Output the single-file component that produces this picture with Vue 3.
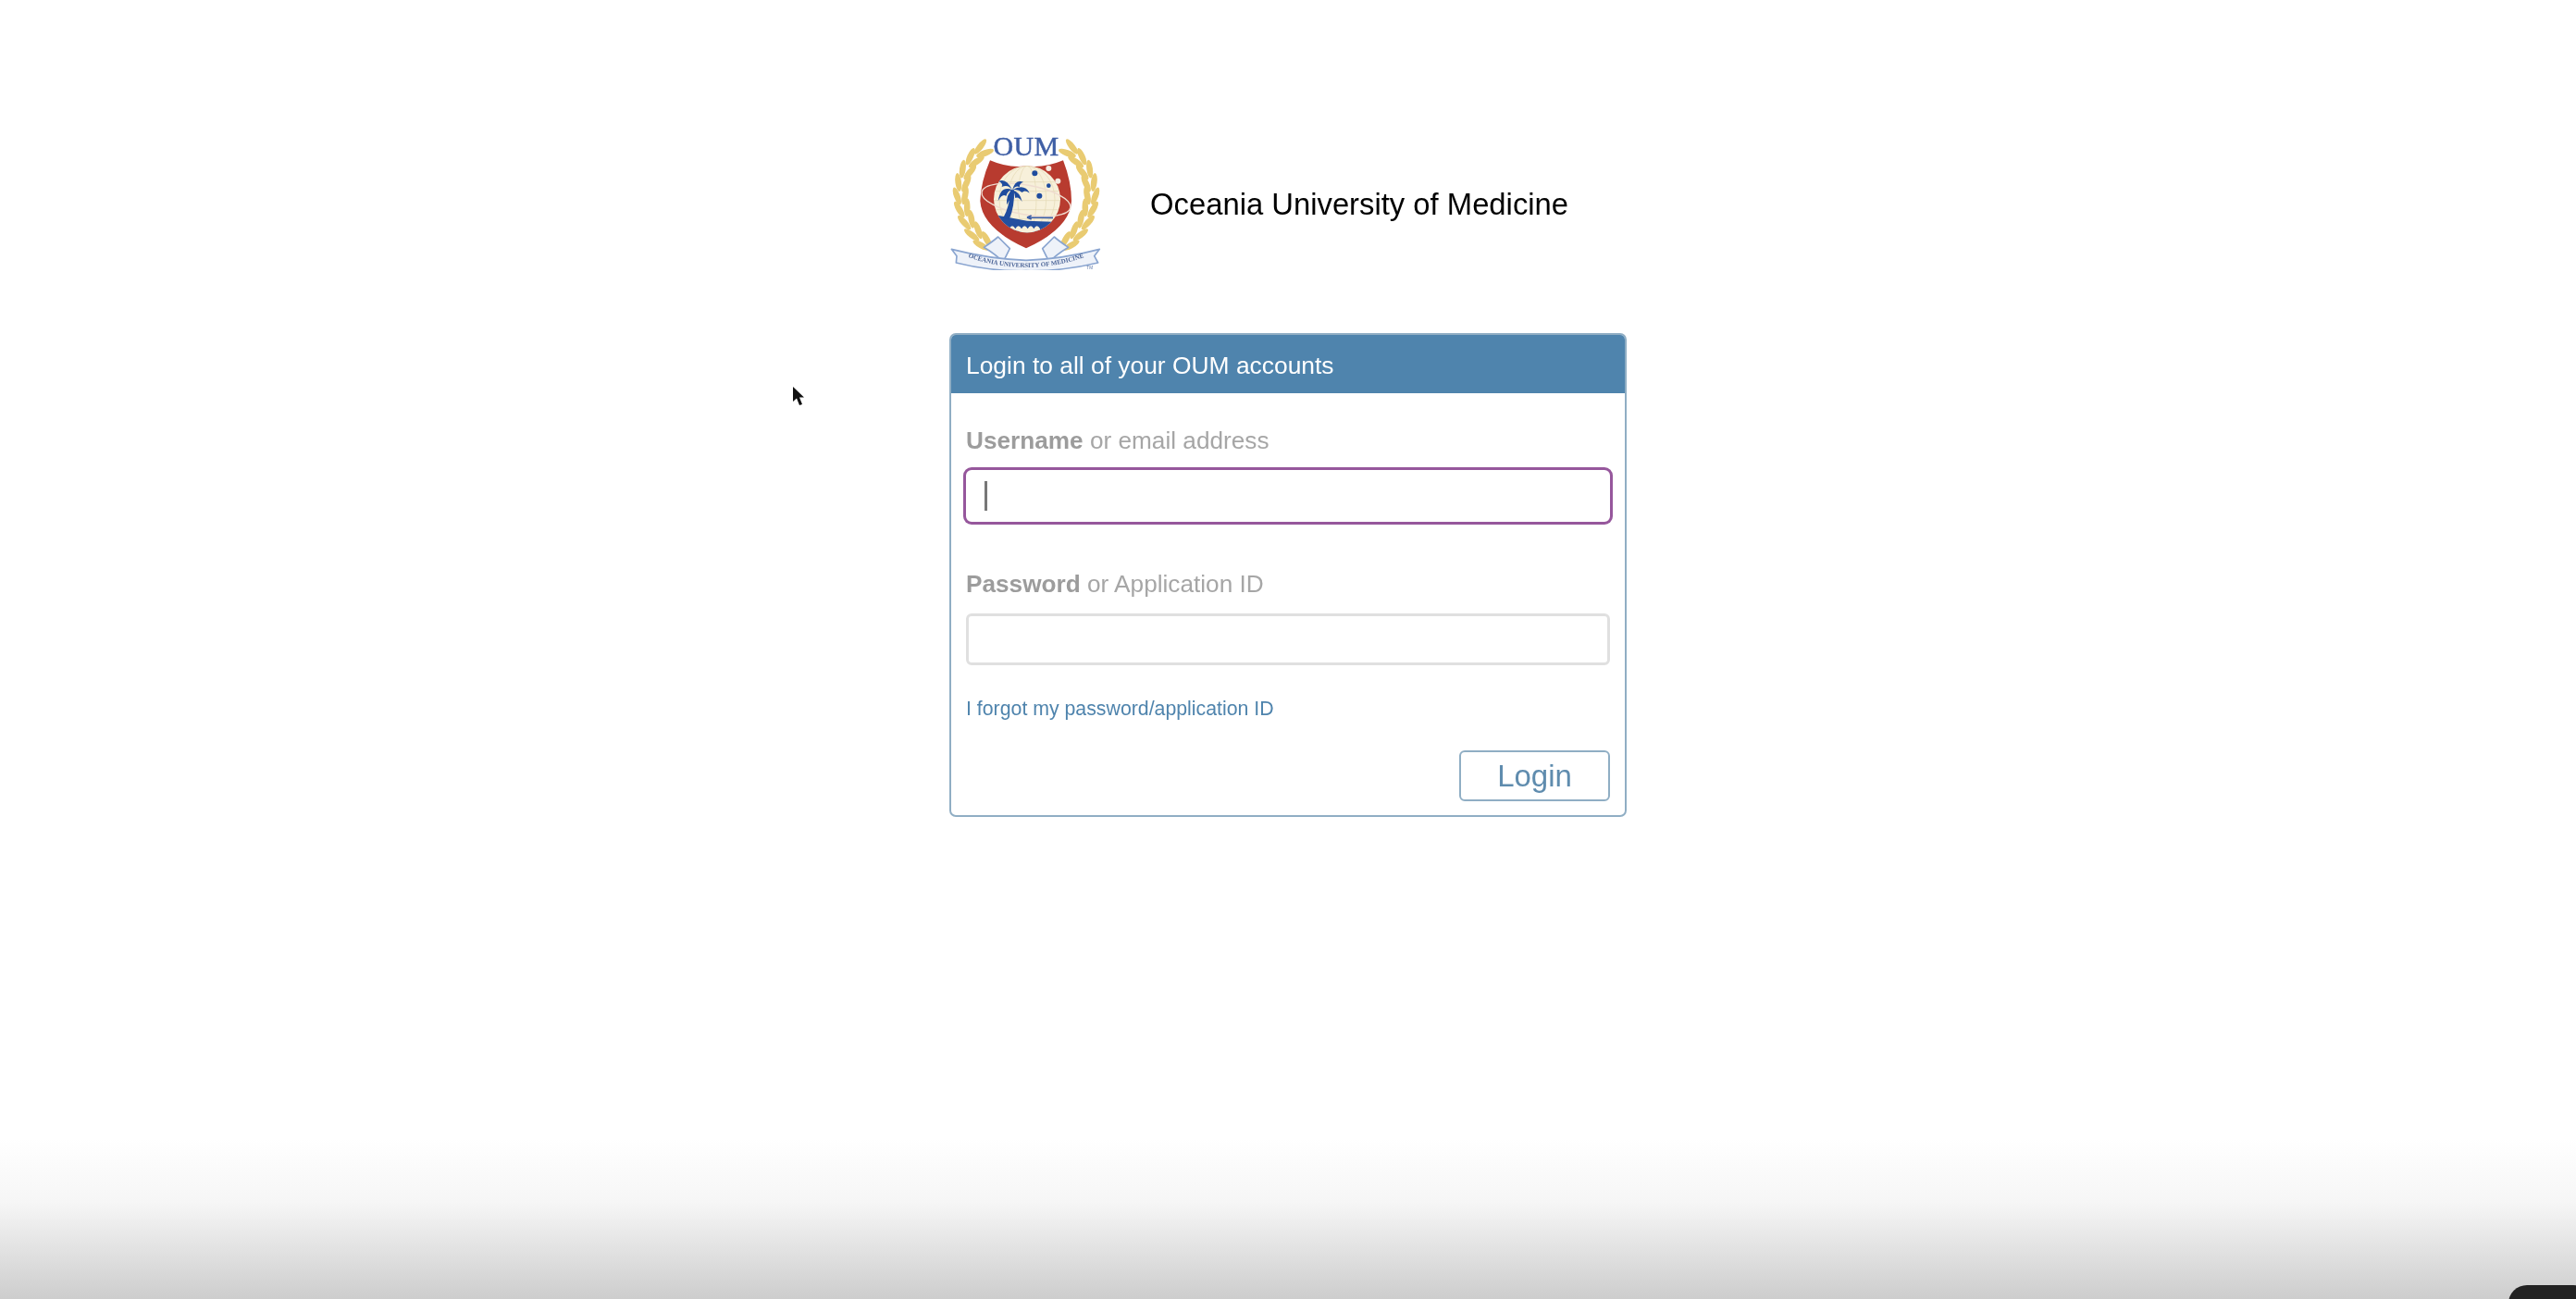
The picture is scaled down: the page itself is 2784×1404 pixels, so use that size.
<script setup>
// centre line of the left laurel: x, y, tangent angle. Right one is mirrored.
const branch = [
  [156, 96, 54], [126, 126, 40], [103, 163, 24], [90, 203, 9], [86, 245, -4],
  [93, 286, -15], [108, 326, -26], [131, 364, -36], [160, 396, -45]
]
const leaves = branch.flatMap(([x, y, a]) => {
  const rad = (a * Math.PI) / 180
  const dx = Math.cos(rad) * 13
  const dy = Math.sin(rad) * 13
  return [
    { x: x - dx, y: y - dy, r: a - 16 },
    { x: x + dx, y: y + dy, r: a + 16 }
  ]
})
const lat = [200, 230, 260, 290, 320]
const lon = [30, 62, 90]
</script>

<template>
  <div class="page">
    <div class="wrap">
      <div class="brand">
        <svg class="logo" viewBox="48 36 504 450">
          <g fill="#e9cb72">
            <ellipse v-for="(l, i) in leaves" :key="'a' + i" :cx="l.x" :cy="l.y" rx="10" ry="30" :transform="`rotate(${l.r} ${l.x} ${l.y})`" />
            <g transform="translate(594 0) scale(-1 1)">
              <ellipse v-for="(l, i) in leaves" :key="'b' + i" :cx="l.x" :cy="l.y" rx="10" ry="30" :transform="`rotate(${l.r} ${l.x} ${l.y})`" />
            </g>
          </g>
          <text class="oum" x="297" y="115" text-anchor="middle">OUM</text>
          <path d="M180 130 Q240 156 297 148 Q355 156 417 130 Q444 200 444 262 Q440 350 297 415 Q154 350 148 262 Q150 200 180 130Z" fill="#b83b2f" />
          <clipPath id="globe"><circle cx="300" cy="256" r="108" /></clipPath>
          <circle cx="300" cy="256" r="108" fill="#f7f0da" />
          <g clip-path="url(#globe)">
            <g fill="none" stroke="#e4d9b4" stroke-width="2">
              <line v-for="y in lat" :key="y" x1="190" x2="410" :y1="y" :y2="y" />
              <ellipse v-for="w in lon" :key="w" cx="300" cy="256" :rx="w" ry="108" />
            </g>
            <path d="M190 306 L300 326 L404 330 V380 H190Z" fill="#24509f" />
            <path d="M222 352 q10 -18 20 0 q10 -18 20 0 q10 -18 20 0 q10 -18 20 0 q10 -18 20 0 q10 -18 20 0 V368 H222Z" fill="#f7f0da" />
          </g>
          <ellipse cx="297" cy="258" rx="146" ry="48" fill="none" stroke="#efdcd0" stroke-width="4" transform="rotate(10 297 258)" />
          <path d="M300 315 L384 316 M300 315 l14 -6 M300 315 l14 6" fill="none" stroke="#3a5ea8" stroke-width="5" />
          <g fill="#1f4c9e">
            <path d="M222 318 Q244 280 246 226 L258 226 Q260 280 242 322Z" />
            <path d="M252 226 Q232 186 208 198 Q224 206 218 216 Q238 206 252 226Z" />
            <path d="M252 226 Q214 210 206 262 Q220 236 232 246 Q238 226 252 226Z" />
            <path d="M252 226 Q232 240 234 274 Q246 250 256 252 Q254 236 252 226Z" />
            <path d="M252 226 Q262 190 288 200 Q274 206 276 216 Q262 210 252 226Z" />
            <path d="M252 226 Q292 204 308 236 Q292 224 284 234 Q270 222 252 226Z" />
            <path d="M252 226 Q278 234 284 264 Q272 246 262 252 Q262 238 252 226Z" />
            <circle cx="325" cy="172" r="9" />
            <circle cx="370" cy="212" r="7" />
            <circle cx="340" cy="245" r="9" />
          </g>
          <g fill="#f6ece2">
            <circle cx="370" cy="156" r="9" />
            <circle cx="400" cy="197" r="9" />
          </g>
          <g fill="#eef2f9" stroke="#8aa5d0" stroke-width="5" stroke-linejoin="round">
            <path d="M160 412 Q190 392 206 378 L244 416 L222 460 Q200 436 160 412Z" />
            <path d="M434 412 Q404 392 388 378 L350 416 L372 460 Q394 436 434 412Z" />
            <path d="M55 418 Q180 450 297 454 Q414 450 535 418 L518 440 L530 462 Q414 490 297 488 Q180 490 70 462 L72 440Z" />
          </g>
          <path id="ribbon-line" d="M92 438 Q190 476 297 477 Q404 476 502 438" fill="none" />
          <text class="motto"><textPath href="#ribbon-line" startOffset="50%" text-anchor="middle">OCEANIA UNIVERSITY OF MEDICINE</textPath></text>
          <text class="tm" x="493" y="484">TM</text>
        </svg>
        <h1 class="title">Oceania University of Medicine</h1>
      </div>

      <form class="card" @submit.prevent>
        <div class="card_head">Login to all of your OUM accounts</div>
        <div class="card_body">
          <label class="label"><b>Username</b> or email address</label>
          <div class="field">
            <input class="input focused" type="text" />
            <span class="caret"></span>
          </div>
          <label class="label second"><b>Password</b> or Application ID</label>
          <div class="field">
            <input class="input" type="password" />
          </div>
          <a class="forgot" href="#">I forgot my password/application ID</a>
          <div class="actions">
            <button class="login" type="submit">Login</button>
          </div>
        </div>
      </form>
    </div>

    <svg class="pointer" viewBox="0 0 16 24" width="16" height="24">
      <path d="M1 1 L1 17 L5 13.5 L8 21 L11 20 L8 12.5 L13 12.5Z" fill="#111" />
    </svg>
    <div class="fade"></div>
    <div class="pill"></div>
  </div>
</template>

<style>
html, body {
  margin: 0;
  background: #fff;
}
</style>

<style scoped>
.page {
  position: relative;
  height: 1404px;
  overflow: hidden;
  font-family: "Liberation Sans", Arial, sans-serif;
  background: #fff;
}

.wrap {
  width: 732px;
  margin: 0 auto;
  padding-top: 142px;
  filter: blur(0.7px);
}

.brand {
  display: flex;
  align-items: center;
  gap: 49px;
  height: 150px;
  margin-bottom: 68px;
}

.logo {
  width: 168px;
  height: 150px;
  flex: none;
}

.oum {
  font-family: "Liberation Serif", serif;
  font-size: 90px;
  letter-spacing: 1px;
  stroke: #3f5fa5;
  stroke-width: 1.5px;
  fill: #3f5fa5;
}

.motto {
  font-family: "Liberation Serif", serif;
  font-size: 21px;
  font-weight: 700;
  fill: #4a6396;
}

.tm {
  font-family: "Liberation Sans", sans-serif;
  font-size: 14px;
  fill: #5d76a8;
}

.title {
  margin: 0;
  padding-top: 7px;
  font-size: 32.8px;
  font-weight: 400;
  color: #000;
}

.card {
  height: 523px;
  box-sizing: border-box;
  border: 2px solid #90aec4;
  border-radius: 7px;
  overflow: hidden;
}

.card_head {
  height: 63px;
  padding-left: 16px;
  background: #4f84ad;
  color: #fff;
  font-size: 26.4px;
  line-height: 66px;
}

.card_body {
  padding: 35px 16px 0;
}

.label {
  display: block;
  font-size: 26.2px;
  line-height: 32px;
  color: #a6a6a6;
}

.label b {
  color: #9c9c9c;
}

.second {
  margin-top: 51px;
}

.field {
  position: relative;
  margin-top: 16px;
}

.input {
  display: block;
  box-sizing: border-box;
  width: 100%;
  height: 56px;
  border: 3px solid #e0e0e0;
  border-radius: 6px;
  outline: none;
  background: #fff;
}

.focused {
  border-color: #fff;
  box-shadow: 0 0 0 3px #96579c;
}

.caret {
  position: absolute;
  left: 20px;
  top: 12px;
  width: 3px;
  height: 32px;
  background: #777;
}

.forgot {
  display: block;
  margin-top: 33px;
  font-size: 21.3px;
  line-height: 28px;
  color: #4f84ad;
  text-decoration: none;
}

.actions {
  display: flex;
  justify-content: flex-end;
  margin-top: 31px;
}

.login {
  width: 163px;
  height: 55px;
  border: 2px solid #90aec4;
  border-radius: 6px;
  background: #fff;
  color: #5f8cae;
  font-family: inherit;
  font-size: 33px;
}

.pointer {
  position: absolute;
  left: 856px;
  top: 417px;
  filter: blur(0.7px);
}

.fade {
  position: absolute;
  left: 0;
  right: 0;
  bottom: 0;
  height: 174px;
  background: linear-gradient(#fff 0, #f6f6f6 40%, #cdcdcd 100%);
}

.pill {
  position: absolute;
  left: 2711px;
  top: 1389px;
  width: 90px;
  height: 40px;
  border-radius: 20px;
  background: #222;
}
</style>
